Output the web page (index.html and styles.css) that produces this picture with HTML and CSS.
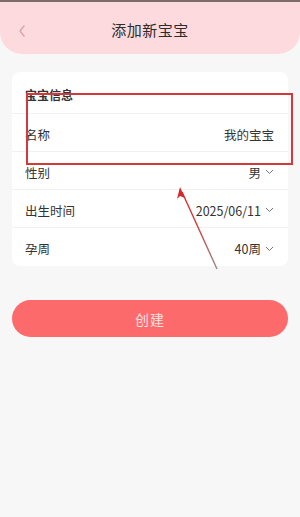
FILE: index.html
```html
<!DOCTYPE html>
<html lang="zh-CN">
<head>
    <meta charset="UTF-8">
    <meta name="viewport" content="width=device-width, initial-scale=1.0">
    <title>添加新宝宝</title>
    <link rel="stylesheet" href="styles.css">
</head>
<body>
    <div class="page">
        <div class="status-line"></div>
        <div class="header">
            <svg class="back" width="10" height="14" viewBox="0 0 10 14">
                <path d="M7 2 L3 7 L7 12" fill="none" stroke="#d9a9b0" stroke-width="1.6" stroke-linecap="round" stroke-linejoin="round"/>
            </svg>
            <div class="title">添加新宝宝</div>
        </div>

        <div class="card">
            <div class="section-title">宝宝信息</div>
            <div class="row">
                <span class="label">名称</span>
                <span class="value">我的宝宝</span>
            </div>
            <div class="row">
                <span class="label">性别</span>
                <span class="value">男<svg class="chev" width="9" height="6" viewBox="0 0 9 6"><path d="M1 1 L4.5 4.5 L8 1" fill="none" stroke="#777" stroke-width="1"/></svg></span>
            </div>
            <div class="row">
                <span class="label">出生时间</span>
                <span class="value">2025/06/11<svg class="chev" width="9" height="6" viewBox="0 0 9 6"><path d="M1 1 L4.5 4.5 L8 1" fill="none" stroke="#777" stroke-width="1"/></svg></span>
            </div>
            <div class="row">
                <span class="label">孕周</span>
                <span class="value">40周<svg class="chev" width="9" height="6" viewBox="0 0 9 6"><path d="M1 1 L4.5 4.5 L8 1" fill="none" stroke="#777" stroke-width="1"/></svg></span>
            </div>
        </div>

        <div class="btn-wrap">
            <button class="create-btn">创建</button>
        </div>

        <!-- annotation -->
        <div class="mark-box"></div>
        <svg class="mark-arrow" width="300" height="517" viewBox="0 0 300 517">
            <defs>
                <linearGradient id="fade" x1="218" y1="270" x2="180" y2="188" gradientUnits="userSpaceOnUse">
                    <stop offset="0" stop-color="#9a8a8a"/>
                    <stop offset="0.5" stop-color="#d04040"/>
                    <stop offset="1" stop-color="#d42a2a"/>
                </linearGradient>
            </defs>
            <line x1="217" y1="269" x2="182" y2="192" stroke="url(#fade)" stroke-width="1.4"/>
            <path d="M180 187 L185 198 L180 196 L177 199 Z" fill="#d42a2a"/>
        </svg>
    </div>
</body>
</html>
```

FILE: styles.css
```css
* {
    margin: 0;
    padding: 0;
    box-sizing: border-box;
}

body {
    font-family: "Noto Sans CJK SC", "Noto Sans", sans-serif;
    background: #f7f7f7;
    width: 300px;
    height: 517px;
    overflow: hidden;
}

.page {
    position: relative;
    width: 300px;
    height: 517px;
}

.status-line {
    height: 2px;
    background: #7d6b6d;
}

/* Header */
.header {
    height: 52px;
    background: #fddadd;
    border-radius: 0 0 22px 22px;
    display: flex;
    align-items: center;
    justify-content: center;
    position: relative;
    padding-top: 2px;
}

.header .back {
    position: absolute;
    left: 17px;
    top: 22px;
}

.title {
    font-size: 15px;
    color: #2c2c2c;
    letter-spacing: 0.5px;
}

/* Card */
.card {
    margin: 18px 12px 0;
    background: #fff;
    border-radius: 8px;
}

.section-title {
    height: 42px;
    display: flex;
    align-items: center;
    padding: 4px 13px 0;
    font-size: 12px;
    font-weight: bold;
    color: #333;
    border-bottom: 1px solid #f1f1f1;
}

.row {
    height: 38px;
    display: flex;
    align-items: center;
    justify-content: space-between;
    border-bottom: 1px solid #f1f1f1;
    padding: 3px 14px 0 13px;
    font-size: 12.5px;
    color: #333;
}

.row:last-child {
    border-bottom: none;
}

.value {
    display: flex;
    align-items: center;
    color: #333;
}

.chev {
    margin-left: 4px;
}

/* Button */
.btn-wrap {
    padding: 34px 12px 0;
}

.create-btn {
    width: 100%;
    height: 37px;
    border: none;
    border-radius: 19px;
    background: #fd6a6b;
    color: #fde3e4;
    font-family: inherit;
    font-size: 14px;
    letter-spacing: 1px;
}

/* Annotation overlay */
.mark-box {
    position: absolute;
    left: 26px;
    top: 93px;
    width: 267px;
    height: 72px;
    border: 2px solid #d4383b;
}

.mark-arrow {
    position: absolute;
    left: 0;
    top: 0;
    pointer-events: none;
}
```
